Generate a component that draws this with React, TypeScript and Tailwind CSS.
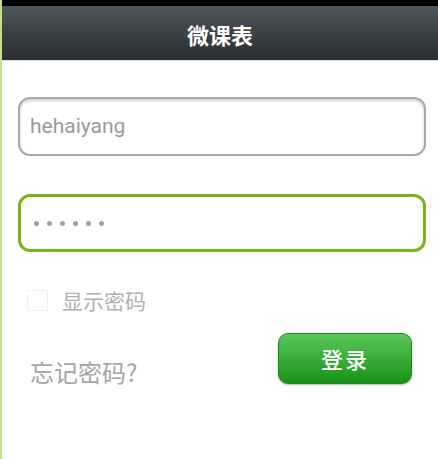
import React from "react";

export default function App() {
  const cjk = { fontFamily: '"Noto Sans CJK SC", "Noto Sans", sans-serif' };
  return (
    <div className="w-[438px] h-[459px] bg-white flex overflow-hidden" style={cjk}>
      <div className="w-[2px] h-full bg-[#bfe08f] shrink-0" />
      <div className="flex-1 flex flex-col">
        <div className="h-[6px] bg-black" />
        <div className="h-[55px] bg-gradient-to-b from-[#4d575a] to-[#292e30] flex items-center justify-center border-b border-[#d8ddd8]">
          <span className="text-white text-[22px] font-bold leading-none mt-[2px]">微课表</span>
        </div>
        <div className="flex flex-col pl-[16px] pr-[12px]">
          <div className="mt-[36px] h-[59px] rounded-[12px] border-2 border-[#a8a8a8] bg-white shadow-[inset_0_2px_3px_rgba(0,0,0,0.18)] flex items-center pl-[10px]">
            <span className="text-[21px] text-[#9a9a9a]" style={{ fontFamily: "Roboto, sans-serif" }}>hehaiyang</span>
          </div>
          <div className="mt-[38px] h-[58px] rounded-[12px] border-[3px] border-[#7cb21c] bg-white flex items-center pl-[13px] gap-[8px]">
            {[0, 1, 2, 3, 4, 5].map((i) => (
              <span key={i} className="w-[5px] h-[5px] rounded-full bg-[#a0a0a0] mt-[1px]" />
            ))}
          </div>
          <div className="mt-[38px] flex items-center pl-[9px]">
            <div className="w-[21px] h-[21px] border border-[#f0f0f0] bg-white" />
            <span className="ml-[14px] text-[21px] text-[#b0b0b0] leading-none">显示密码</span>
          </div>
          <div className="mt-[22px] flex items-start justify-between pl-[12px] pr-[14px]">
            <span className="text-[24px] leading-[36px] text-[#a5a5a5] mt-[21px]">忘记密码?</span>
            <div className="w-[134px] h-[51px] rounded-[10px] bg-gradient-to-b from-[#58c858] to-[#139313] border border-[#168a16] shadow-[0_1px_2px_rgba(0,0,0,0.3)] flex items-center justify-center">
              <span className="text-white text-[22px] font-medium tracking-[2px]">登录</span>
            </div>
          </div>
        </div>
      </div>
    </div>
  );
}
